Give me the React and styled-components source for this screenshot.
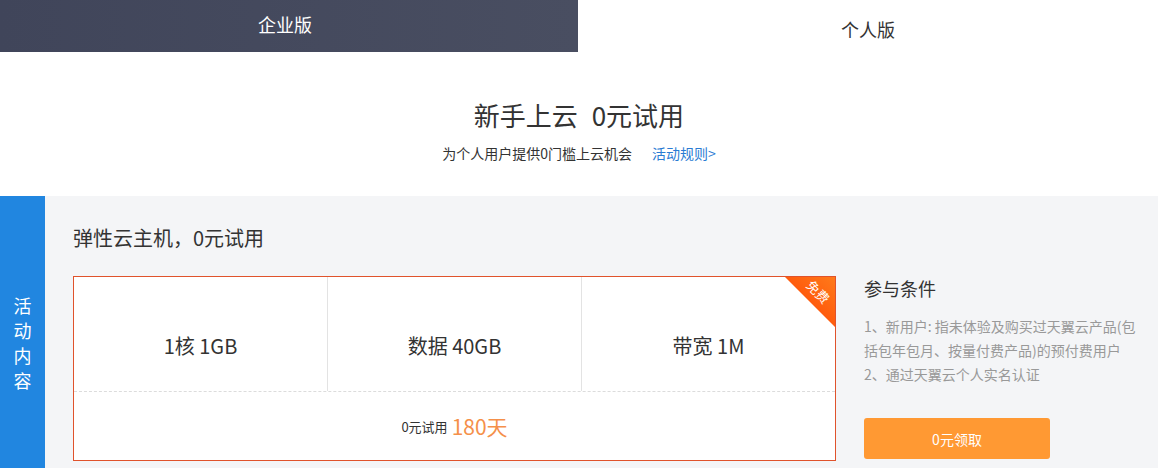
import React from "react";
import styled, { createGlobalStyle } from "styled-components";

const Global = createGlobalStyle`
  html, body { margin: 0; padding: 0; background: #fff; }
  body { font-family: "Microsoft YaHei", "Noto Sans CJK SC", "Liberation Sans", sans-serif; color: #333; }
  * { box-sizing: border-box; }
`;

const Page = styled.div`
  width: 1158px;
  height: 468px;
  overflow: hidden;
`;

const Tabs = styled.div`
  display: flex;
  height: 52px;
`;

const Tab = styled.div`
  flex-shrink: 0;
  width: ${p => (p.$active ? "578px" : "580px")};
  display: flex;
  align-items: center;
  justify-content: center;
  font-size: 18px;
  padding: ${p => (p.$active ? "0 8px 4px 0" : "6px 0 0 0")};
  color: ${p => (p.$active ? "#fff" : "#333")};
  background: ${p => (p.$active ? "linear-gradient(90deg, #40455a 0%, #494e61 100%)" : "#fff")};
`;

const Header = styled.div`
  display: flex;
  flex-direction: column;
  align-items: center;
  padding-top: 45px;
  height: 144px;
`;

const Title = styled.h1`
  margin: 0;
  font-size: 26px;
  font-weight: normal;
  line-height: 36px;
  color: #333;
  word-spacing: 8px;
`;

const Sub = styled.div`
  margin-top: 11px;
  font-size: 14px;
  line-height: 18px;
  color: #333;
  display: flex;
  gap: 20px;
`;

const Link = styled.a`
  color: #2a7bd3;
  text-decoration: none;
`;

const Section = styled.div`
  display: flex;
  background: #f4f5f7;
  height: 272px;
`;

const SideLabel = styled.div`
  flex-shrink: 0;
  width: 45px;
  background: #2186e0;
  color: #fff;
  font-size: 18px;
  line-height: 25px;
  display: flex;
  flex-direction: column;
  align-items: center;
  padding-top: 97px;
`;

const Content = styled.div`
  flex: 1;
  padding: 28px 0 0 28px;
`;

const SectionTitle = styled.div`
  font-size: 20px;
  line-height: 28px;
  color: #333;
`;

const Row = styled.div`
  display: flex;
  margin-top: 24px;
`;

const Card = styled.div`
  position: relative;
  flex-shrink: 0;
  width: 763px;
  height: 185px;
  background: #fff;
  border: 1px solid #e0532c;
  display: flex;
  flex-direction: column;
  overflow: hidden;
`;

const Specs = styled.div`
  display: flex;
  height: 115px;
  border-bottom: 1px dashed #dcdcdc;
`;

const Spec = styled.div`
  flex: 1;
  display: flex;
  align-items: center;
  justify-content: center;
  font-size: 20px;
  color: #333;
  padding-top: 22px;
  & + & { border-left: 1px solid #e3e3e3; }
`;

const Trial = styled.div`
  flex: 1;
  display: flex;
  align-items: center;
  justify-content: center;
  font-size: 13px;
  color: #333;
  gap: 4px;
`;

const Days = styled.span`
  font-size: 21px;
  color: #f5904a;
`;

const Corner = styled.div`
  position: absolute;
  top: 0;
  right: 0;
  width: 50px;
  height: 50px;
  background: linear-gradient(225deg, #ff7a1a 0%, #ff3d00 100%);
  clip-path: polygon(0 0, 100% 0, 100% 100%);
`;

const CornerText = styled.span`
  position: absolute;
  top: 8px;
  right: -3px;
  width: 40px;
  text-align: center;
  transform: rotate(45deg);
  font-size: 13px;
  line-height: 14px;
  color: #fff;
`;

const Cond = styled.div`
  margin-left: 28px;
  width: 300px;
`;

const CondTitle = styled.div`
  font-size: 18px;
  line-height: 24px;
  color: #333;
`;

const CondList = styled.div`
  margin-top: 14px;
  font-size: 14px;
  line-height: 24px;
  color: #999;
  white-space: nowrap;
`;

const Button = styled.button`
  margin-top: 32px;
  width: 186px;
  height: 41px;
  border: none;
  border-radius: 3px;
  background: #ff9933;
  color: #fff;
  font-size: 14px;
  font-family: inherit;
`;

export default function App() {
  return (
    <Page>
      <Global />
      <Tabs>
        <Tab $active>企业版</Tab>
        <Tab>个人版</Tab>
      </Tabs>
      <Header>
        <Title>新手上云 0元试用</Title>
        <Sub>
          <span>为个人用户提供0门槛上云机会</span>
          <Link>活动规则&gt;</Link>
        </Sub>
      </Header>
      <Section>
        <SideLabel>
          <span>活</span>
          <span>动</span>
          <span>内</span>
          <span>容</span>
        </SideLabel>
        <Content>
          <SectionTitle>弹性云主机，0元试用</SectionTitle>
          <Row>
            <Card>
              <Specs>
                <Spec>1核 1GB</Spec>
                <Spec>数据 40GB</Spec>
                <Spec>带宽 1M</Spec>
              </Specs>
              <Trial>
                0元试用 <Days>180天</Days>
              </Trial>
              <Corner />
              <CornerText>免费</CornerText>
            </Card>
            <Cond>
              <CondTitle>参与条件</CondTitle>
              <CondList>
                <div>1、新用户: 指未体验及购买过天翼云产品(包</div>
                <div>括包年包月、按量付费产品)的预付费用户</div>
                <div>2、通过天翼云个人实名认证</div>
              </CondList>
              <Button>0元领取</Button>
            </Cond>
          </Row>
        </Content>
      </Section>
    </Page>
  );
}
